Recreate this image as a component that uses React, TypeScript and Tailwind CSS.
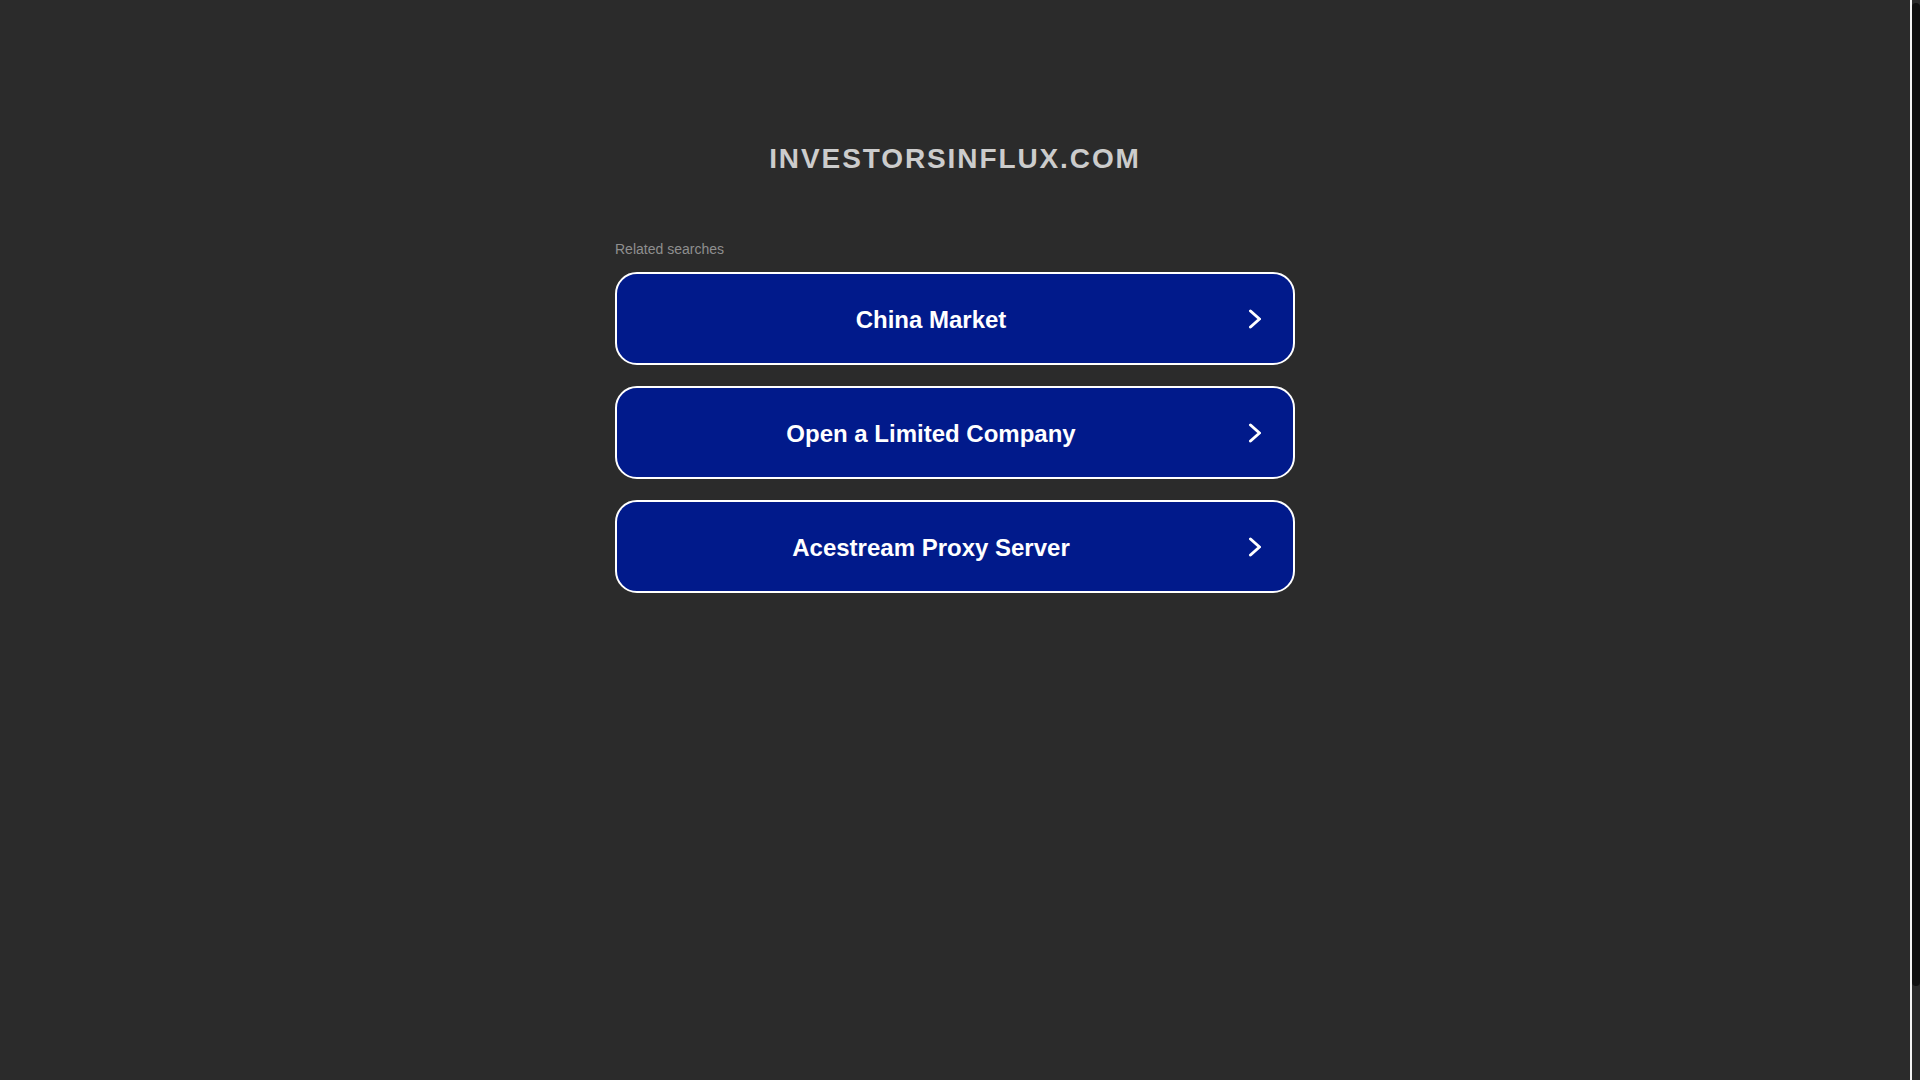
import React from "react";

const items = ["China Market", "Open a Limited Company", "Acestream Proxy Server"];

function Chevron() {
  return (
    <svg width="16" height="22" viewBox="0 0 16 22" fill="none" className="shrink-0">
      <path d="M5.5 3 L14.5 11 L5.5 19" stroke="#ffffff" strokeWidth="3" strokeLinecap="round" strokeLinejoin="round" />
    </svg>
  );
}

export default function App() {
  return (
    <div
      className="flex h-screen w-full overflow-hidden bg-[#2b2b2b]"
      style={{ fontFamily: '"Liberation Sans", Arial, sans-serif' }}
    >
      <main className="min-w-0 flex-1 pt-[143px]">
        <h1 className="text-center text-[28px] leading-[32px] font-bold tracking-[1.9px] text-[#cccccc]">
          INVESTORSINFLUX.COM
        </h1>
        <div className="mx-auto mt-[66px] w-[680px]">
          <div className="text-[14px] leading-[16px] text-[#8f8f8f]">Related searches</div>
          <div className="mt-[15px] flex flex-col gap-[21px]">
            {items.map((t) => (
              <a
                key={t}
                href="#"
                className="flex h-[93px] items-center rounded-[22px] border-2 border-white bg-[#011a8b] pr-[32px] text-white no-underline"
              >
                <span className="flex-1 pt-[2px] text-center text-[24px] font-bold leading-[28px]">{t}</span>
                <Chevron />
              </a>
            ))}
          </div>
        </div>
      </main>
      <div className="w-[10px] shrink-0 border-l-2 border-[#f5f5f5] bg-[#2b2b2b] pt-[3px]">
        <div className="h-[983px] rounded-[4px] bg-[#111111]" />
      </div>
    </div>
  );
}
